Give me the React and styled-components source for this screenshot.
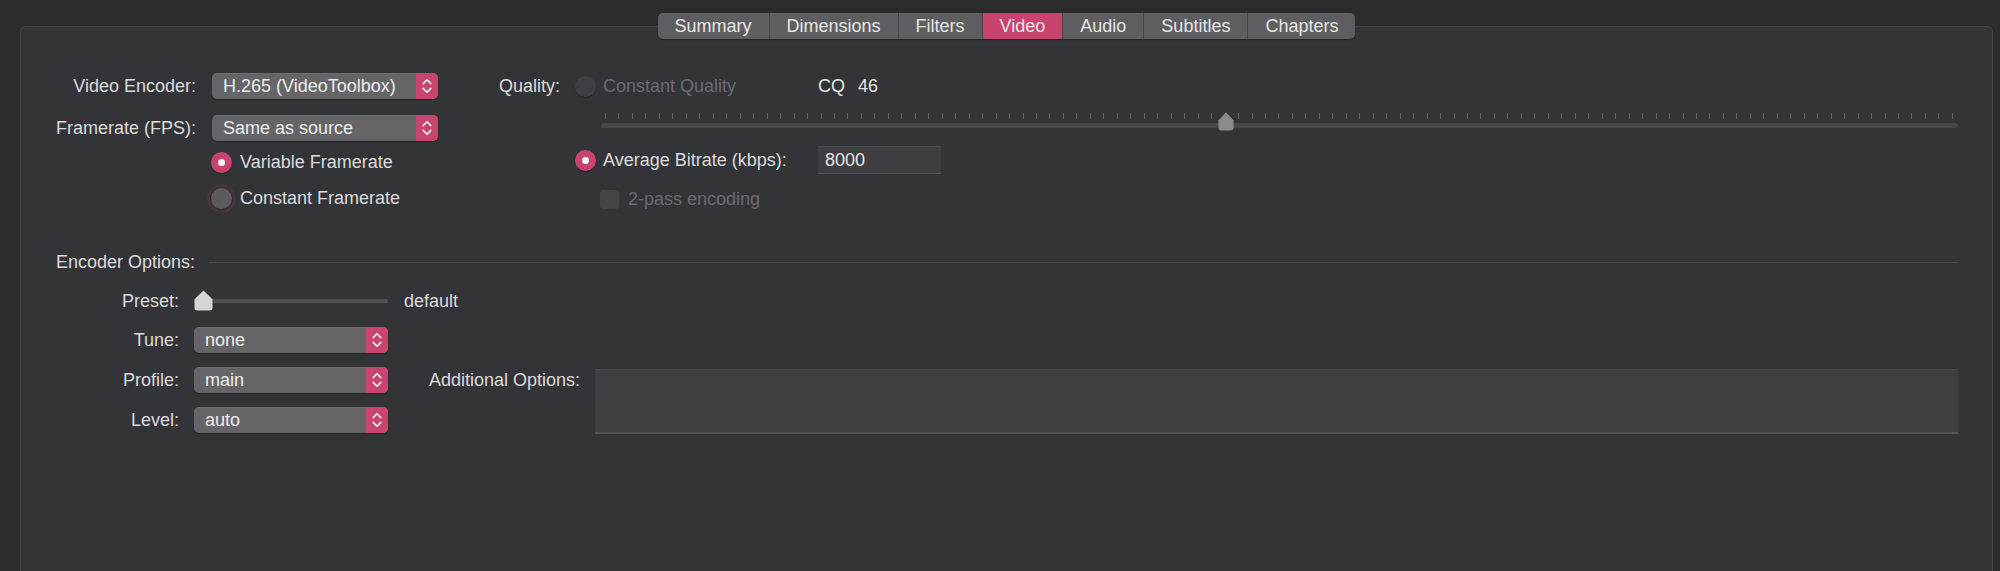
import React from "react";
import styled, { createGlobalStyle } from "styled-components";

const GlobalStyle = createGlobalStyle`
  html, body { margin: 0; padding: 0; background: #2b2c2f; }
  body {
    font-family: "Liberation Sans", Arial, Helvetica, sans-serif;
    font-size: 18px;
    color: #dcdcdc;
    -webkit-font-smoothing: antialiased;
  }
  #root { width: 2000px; height: 571px; overflow: hidden; }
  * { box-sizing: border-box; }
`;

const Page = styled.div`
  height: 571px;
  padding: 13px 7px 0 20px;
  display: flex;
  flex-direction: column;
`;

const TabBar = styled.div`
  align-self: center;
  display: flex;
  height: 26px;
  border-radius: 5px;
  overflow: hidden;
  background: #5e5e61;
  margin-bottom: -13px;
  position: relative;
  z-index: 1;
  box-shadow: 0 1px 1px rgba(0, 0, 0, 0.35), inset 0 1px 0 rgba(255, 255, 255, 0.06);
`;

const Tab = styled.div`
  display: flex;
  align-items: center;
  padding: 0 17px;
  color: #e6e6e6;
  background: ${(p) => (p.$active ? "#c8446f" : "transparent")};
  border-left: ${(p) => (p.$first ? "none" : "1px solid #47474a")};
  white-space: nowrap;
`;

const Panel = styled.div`
  flex: 1;
  background: #333438;
  border: 1px solid #424346;
  border-bottom: none;
  border-radius: 6px 6px 0 0;
  padding: 46px 34px 0 35px;
  display: flex;
  flex-direction: column;
`;

const TopSection = styled.div`
  display: flex;
  align-items: flex-start;
`;

const LeftBlock = styled.div`
  display: flex;
  flex-direction: column;
  width: 382px;
  flex-shrink: 0;
`;

const RightBlock = styled.div`
  display: flex;
  flex-direction: column;
  flex: 1;
  margin-left: 32px;
`;

const Row = styled.div`
  display: flex;
  align-items: center;
  height: ${(p) => p.$h}px;
  margin-top: ${(p) => p.$mt || 0}px;
  padding-left: ${(p) => p.$indent || 0}px;
`;

const FieldLabel = styled.span`
  width: ${(p) => p.$w}px;
  padding-right: ${(p) => p.$pr ?? 16}px;
  text-align: right;
  flex-shrink: 0;
  white-space: nowrap;
  color: #dcdcdc;
`;

const OptionText = styled.span`
  color: ${(p) => (p.$disabled ? "#6b6b6e" : "#dcdcdc")};
  margin-left: ${(p) => p.$gap ?? 8}px;
  width: ${(p) => (p.$w ? `${p.$w}px` : "auto")};
  flex-shrink: 0;
  white-space: nowrap;
`;

const PopUp = styled.div`
  display: flex;
  height: 26px;
  width: ${(p) => p.$w}px;
  border-radius: 5px;
  overflow: hidden;
  background: #656568;
  box-shadow: 0 1px 1px rgba(0, 0, 0, 0.35), inset 0 1px 0 rgba(255, 255, 255, 0.07);
`;

const PopText = styled.span`
  flex: 1;
  padding-left: 11px;
  line-height: 26px;
  color: #ececec;
  white-space: nowrap;
`;

const Stepper = styled.span`
  width: 22px;
  display: flex;
  align-items: center;
  justify-content: center;
  background: #c9456f;
`;

const RadioCircle = styled.span`
  width: 21px;
  height: 21px;
  border-radius: 50%;
  flex-shrink: 0;
  display: flex;
  align-items: center;
  justify-content: center;
  background: ${(p) =>
    p.$state === "on" ? "#c8446f" : p.$state === "disabled" ? "#3f4043" : "#5b5b5e"};
  box-shadow: ${(p) =>
    p.$state === "focus"
      ? "0 0 0 1px #2f2f32, 0 0 0 4px #45353f"
      : "0 1px 1px rgba(0,0,0,0.3)"};
`;

const RadioDot = styled.span`
  width: 7px;
  height: 7px;
  border-radius: 50%;
  background: #f6f6f6;
`;

const CheckBox = styled.span`
  width: 19px;
  height: 19px;
  border-radius: 4px;
  background: #434447;
  flex-shrink: 0;
`;

const ValueGroup = styled.span`
  display: flex;
  gap: 13px;
  color: #e4e4e4;
`;

const TextField = styled.div`
  width: 123px;
  height: 28px;
  background: #3d3e41;
  border-top: 1px solid #47484b;
  border-bottom: 1px solid #525356;
  padding-left: 7px;
  line-height: 26px;
  color: #e6e6e6;
`;

const Slider = styled.div`
  position: relative;
  flex: 1;
  height: ${(p) => p.$h}px;
  padding-top: ${(p) => p.$pt || 0}px;
  display: flex;
  flex-direction: column;
  justify-content: ${(p) => (p.$center ? "center" : "flex-start")};
`;

const Ticks = styled.div`
  display: flex;
  justify-content: space-between;
  padding: 0 4px;
  height: 6px;
`;

const Tick = styled.span`
  width: 1px;
  height: 6px;
  background: #656568;
`;

const Track = styled.div`
  height: ${(p) => p.$h}px;
  margin-top: ${(p) => p.$mt || 0}px;
  border-radius: 3px;
  background: ${(p) => p.$color};
`;

const ThumbWrap = styled.span`
  position: absolute;
  top: ${(p) => p.$top}px;
  display: flex;
`;

const SectionHeader = styled.div`
  display: flex;
  align-items: center;
  height: 20px;
  margin-top: 42px;
`;

const HeaderLine = styled.div`
  flex: 1;
  height: 1px;
  margin-left: 14px;
  background: #4a4b4e;
`;

const EncoderGrid = styled.div`
  display: grid;
  grid-template-columns: 138px 194px 207px 1fr;
  grid-template-rows: 24px 26px 26px 26px;
  row-gap: 14px;
  margin-top: 17px;
  align-items: center;
`;

const GridLabel = styled.span`
  grid-column: ${(p) => p.$col};
  grid-row: ${(p) => p.$row};
  text-align: ${(p) => p.$align || "right"};
  padding-right: ${(p) => p.$pr ?? 15}px;
  padding-left: ${(p) => p.$pl ?? 0}px;
  white-space: nowrap;
  color: #dcdcdc;
`;

const GridCell = styled.div`
  grid-column: ${(p) => p.$col};
  grid-row: ${(p) => p.$row};
  display: flex;
`;

const TextArea = styled.div`
  grid-column: 4;
  grid-row: 3 / span 2;
  align-self: start;
  margin-top: 2px;
  height: 65px;
  background: #3e3f42;
  border-top: 1px solid #48494c;
  border-bottom: 2px solid #525356;
`;

const Chevrons = () => (
  <svg width="10" height="16" viewBox="0 0 10 16">
    <path d="M1.2 5.6 L5 1.8 L8.8 5.6" fill="none" stroke="#fff" strokeWidth="1.5" strokeLinecap="round" strokeLinejoin="round" />
    <path d="M1.2 10.4 L5 14.2 L8.8 10.4" fill="none" stroke="#fff" strokeWidth="1.5" strokeLinecap="round" strokeLinejoin="round" />
  </svg>
);

const Popup = ({ value, width }) => (
  <PopUp $w={width}>
    <PopText>{value}</PopText>
    <Stepper>
      <Chevrons />
    </Stepper>
  </PopUp>
);

const Radio = ({ state }) => (
  <RadioCircle $state={state}>{state === "on" && <RadioDot />}</RadioCircle>
);

const Thumb = ({ w, h, color }) => (
  <svg width={w} height={h} viewBox={`0 0 ${w} ${h}`}>
    <path
      d={`M${w / 2} 0.5 L${w - 0.5} ${h * 0.44} V${h - 3} Q${w - 0.5} ${h - 0.5} ${w - 3.5} ${h - 0.5} H3.5 Q0.5 ${h - 0.5} 0.5 ${h - 3} V${h * 0.44} Z`}
      fill={color}
    />
  </svg>
);

const tabs = ["Summary", "Dimensions", "Filters", "Video", "Audio", "Subtitles", "Chapters"];
const ticks = Array.from({ length: 101 }, (_, i) => i);
const cq = 46;

export default function App() {
  return (
    <>
      <GlobalStyle />
      <Page>
        <TabBar>
          {tabs.map((t, i) => (
            <Tab key={t} $first={i === 0} $active={t === "Video"}>
              {t}
            </Tab>
          ))}
        </TabBar>
        <Panel>
          <TopSection>
            <LeftBlock>
              <Row $h={26}>
                <FieldLabel $w={156}>Video Encoder:</FieldLabel>
                <Popup value="H.265 (VideoToolbox)" width={226} />
              </Row>
              <Row $h={26} $mt={16}>
                <FieldLabel $w={156}>Framerate (FPS):</FieldLabel>
                <Popup value="Same as source" width={226} />
              </Row>
              <Row $h={22} $mt={10} $indent={155}>
                <Radio state="on" />
                <OptionText>Variable Framerate</OptionText>
              </Row>
              <Row $h={22} $mt={14} $indent={155}>
                <Radio state="focus" />
                <OptionText>Constant Framerate</OptionText>
              </Row>
            </LeftBlock>
            <RightBlock>
              <Row $h={26}>
                <FieldLabel $w={105} $pr={15}>Quality:</FieldLabel>
                <Radio state="disabled" />
                <OptionText $disabled $gap={7} $w={215}>Constant Quality</OptionText>
                <ValueGroup>
                  <span>CQ</span>
                  <span>{cq}</span>
                </ValueGroup>
              </Row>
              <Row $h={28} $mt={9} $indent={131}>
                <Slider $h={28} $pt={5}>
                  <Ticks>
                    {ticks.map((i) => (
                      <Tick key={i} />
                    ))}
                  </Ticks>
                  <Track $h={5} $mt={4} $color="#454649" />
                  <ThumbWrap
                    $top={4}
                    style={{ left: `calc(4px + ${cq / 100} * (100% - 8px) - 8px)` }}
                  >
                    <Thumb w={16} h={19} color="#8b8b8e" />
                  </ThumbWrap>
                </Slider>
              </Row>
              <Row $h={28} $mt={10} $indent={105}>
                <Radio state="on" />
                <OptionText $gap={7} $w={215}>Average Bitrate (kbps):</OptionText>
                <TextField>8000</TextField>
              </Row>
              <Row $h={22} $mt={14} $indent={130}>
                <CheckBox />
                <OptionText $disabled $gap={9}>2-pass encoding</OptionText>
              </Row>
            </RightBlock>
          </TopSection>

          <SectionHeader>
            <span>Encoder Options:</span>
            <HeaderLine />
          </SectionHeader>

          <EncoderGrid>
            <GridLabel $col={1} $row={1}>Preset:</GridLabel>
            <GridCell $col={2} $row={1}>
              <Slider $h={24} $center>
                <Track $h={4} $color="#505053" />
                <ThumbWrap $top={1} style={{ left: "0px" }}>
                  <Thumb w={19} h={21} color="#d5d5d7" />
                </ThumbWrap>
              </Slider>
            </GridCell>
            <GridLabel $col={3} $row={1} $align="left" $pl={16} $pr={0}>default</GridLabel>

            <GridLabel $col={1} $row={2}>Tune:</GridLabel>
            <GridCell $col={2} $row={2}>
              <Popup value="none" width={194} />
            </GridCell>

            <GridLabel $col={1} $row={3}>Profile:</GridLabel>
            <GridCell $col={2} $row={3}>
              <Popup value="main" width={194} />
            </GridCell>
            <GridLabel $col={3} $row={3}>Additional Options:</GridLabel>
            <TextArea />

            <GridLabel $col={1} $row={4}>Level:</GridLabel>
            <GridCell $col={2} $row={4}>
              <Popup value="auto" width={194} />
            </GridCell>
          </EncoderGrid>
        </Panel>
      </Page>
    </>
  );
}
